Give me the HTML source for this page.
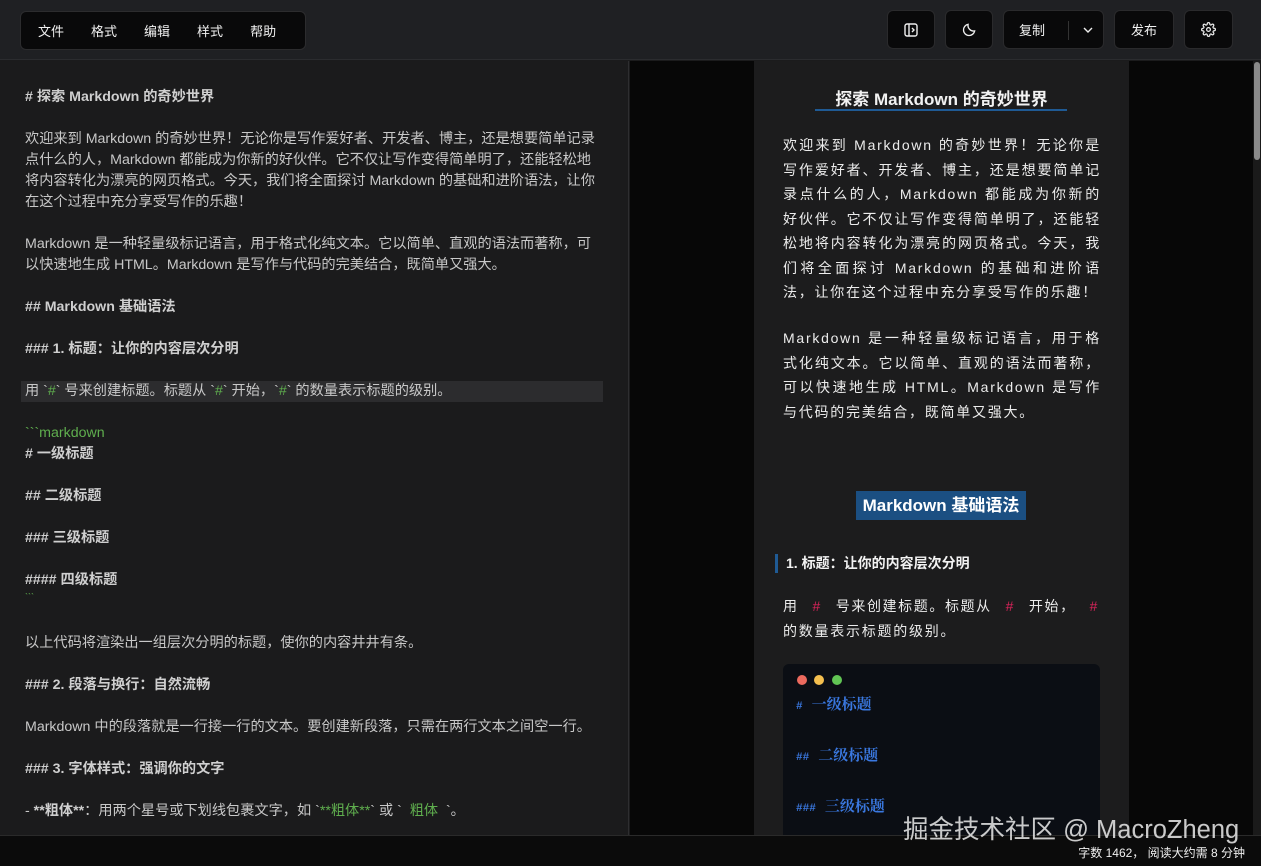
<!DOCTYPE html>
<html><head><meta charset="utf-8">
<style>
*{box-sizing:border-box;margin:0;padding:0}
body{width:1261px;height:866px;overflow:hidden;background:#1b1b1c;font-family:"Liberation Sans","Noto Sans CJK SC",sans-serif;position:relative;color:#ccc}
.top{position:absolute;left:0;top:0;width:1261px;height:60px;background:#1f2023;border-bottom:1px solid #2b2c2f}
.menu{position:absolute;left:20px;top:11px;width:286px;height:39px;background:#09090a;border:1px solid #2c2c2e;border-radius:6px;display:flex;align-items:center;padding-left:17px;gap:27px;font-size:13px;color:#f2f2f2}
.btn{position:absolute;top:10px;height:39px;background:#09090a;border:1px solid #2a2a2c;border-radius:6px;display:flex;align-items:center;justify-content:center;color:#f2f2f2;font-size:13px}
.editor{position:absolute;left:0;top:61px;width:629px;height:774px;background:#1b1b1c;border-right:1px solid #2e2e30;padding:26px 0 0 25px;font-size:14.2px;color:#c8c8c8}
.editor div{height:21px;line-height:21px;white-space:nowrap}
.b{font-weight:bold;color:#cfcfcf}
.g{color:#5fae4e}
.hl{background:#2c2c2e;margin-left:-4px;padding-left:4px;width:582px}
.pv{position:absolute;left:630px;top:61px;width:623px;height:774px;background:#070707}
.card{position:absolute;left:754px;top:61px;width:375px;height:774px;background:#1c1c1d;overflow:hidden}
.card p{position:absolute;left:29px;width:318px;font-size:14px;line-height:24.5px;letter-spacing:1.75px;color:#ececec;text-align:justify}
.sb{position:absolute;left:1253px;top:61px;width:8px;height:774px;background:#1a1a1a}
.foot{position:absolute;left:0;top:835px;width:1261px;height:31px;background:#0b0b0b;border-top:1px solid #2a2a2a}
.h{color:#d8245a}
</style></head><body>
<div class="top">
 <div class="menu"><span>文件</span><span>格式</span><span>编辑</span><span>样式</span><span>帮助</span></div>
 <div class="btn" style="left:887px;width:48px"><svg width="14" height="14" viewBox="0 0 14 14" fill="none" stroke="#eee" stroke-width="1.4"><rect x="1" y="1" width="12" height="12" rx="2"/><line x1="5" y1="1" x2="5" y2="13"/><path d="M8 5l2 2-2 2"/></svg></div>
 <div class="btn" style="left:945px;width:48px"><svg width="15" height="15" viewBox="0 0 16 16" fill="none" stroke="#eee" stroke-width="1.4"><path d="M13.5 9.5A6 6 0 0 1 6.5 2.5a6 6 0 1 0 7 7z"/></svg></div>
 <div class="btn" style="left:1003px;width:101px;justify-content:flex-start"><span style="margin-left:15px">复制</span><span style="position:absolute;left:64px;top:10px;width:1px;height:19px;background:#333"></span><svg style="position:absolute;left:78px;top:14px" width="12" height="10" viewBox="0 0 12 10" fill="none" stroke="#eee" stroke-width="1.4"><path d="M2 3l4 4 4-4"/></svg></div>
 <div class="btn" style="left:1114px;width:60px">发布</div>
 <div class="btn" style="left:1184px;width:49px"><svg width="15" height="15" viewBox="0 0 24 24" fill="none" stroke="#eee" stroke-width="2"><circle cx="12" cy="12" r="3"/><path d="M19.4 15a1.7 1.7 0 0 0 .3 1.8l.1.1a2 2 0 1 1-2.8 2.8l-.1-.1a1.7 1.7 0 0 0-1.8-.3 1.7 1.7 0 0 0-1 1.5V21a2 2 0 1 1-4 0v-.1a1.7 1.7 0 0 0-1.1-1.5 1.7 1.7 0 0 0-1.8.3l-.1.1a2 2 0 1 1-2.8-2.8l.1-.1a1.7 1.7 0 0 0 .3-1.8 1.7 1.7 0 0 0-1.5-1H3a2 2 0 1 1 0-4h.1a1.7 1.7 0 0 0 1.5-1.1 1.7 1.7 0 0 0-.3-1.8l-.1-.1a2 2 0 1 1 2.8-2.8l.1.1a1.7 1.7 0 0 0 1.8.3H9a1.7 1.7 0 0 0 1-1.5V3a2 2 0 1 1 4 0v.1a1.7 1.7 0 0 0 1 1.5 1.7 1.7 0 0 0 1.8-.3l.1-.1a2 2 0 1 1 2.8 2.8l-.1.1a1.7 1.7 0 0 0-.3 1.8V9a1.7 1.7 0 0 0 1.5 1H21a2 2 0 1 1 0 4h-.1a1.7 1.7 0 0 0-1.5 1z"/></svg></div>
</div>
<div class="editor">
<div class="b"># 探索 Markdown 的奇妙世界</div><div></div>
<div>欢迎来到 Markdown 的奇妙世界！无论你是写作爱好者、开发者、博主，还是想要简单记录</div>
<div>点什么的人，Markdown 都能成为你新的好伙伴。它不仅让写作变得简单明了，还能轻松地</div>
<div>将内容转化为漂亮的网页格式。今天，我们将全面探讨 Markdown 的基础和进阶语法，让你</div>
<div>在这个过程中充分享受写作的乐趣！</div><div></div>
<div>Markdown 是一种轻量级标记语言，用于格式化纯文本。它以简单、直观的语法而著称，可</div>
<div>以快速地生成 HTML。Markdown 是写作与代码的完美结合，既简单又强大。</div><div></div>
<div class="b">## Markdown 基础语法</div><div></div>
<div class="b">### 1. 标题：让你的内容层次分明</div><div></div>
<div class="hl">用 &#96;<span class="g">#</span>&#96; 号来创建标题。标题从 &#96;<span class="g">#</span>&#96; 开始，&#96;<span class="g">#</span>&#96; 的数量表示标题的级别。</div><div></div>
<div class="g">&#96;&#96;&#96;markdown</div>
<div class="b"># 一级标题</div><div></div>
<div class="b">## 二级标题</div><div></div>
<div class="b">### 三级标题</div><div></div>
<div class="b">#### 四级标题</div>
<div class="g" style="font-size:9px;line-height:12px;height:42px">&#96;&#96;&#96;</div>
<div>以上代码将渲染出一组层次分明的标题，使你的内容井井有条。</div><div></div>
<div class="b">### 2. 段落与换行：自然流畅</div><div></div>
<div>Markdown 中的段落就是一行接一行的文本。要创建新段落，只需在两行文本之间空一行。</div><div></div>
<div class="b">### 3. 字体样式：强调你的文字</div><div></div>
<div>- <span class="b">**粗体**</span>：用两个星号或下划线包裹文字，如 &#96;<span class="g">**粗体**</span>&#96; 或 &#96;&nbsp;&nbsp;<span class="g">粗体</span>&nbsp;&nbsp;&#96;。</div>
</div>
<div class="pv"></div>
<div class="card">
 <div style="position:absolute;left:0;width:375px;top:24px;text-align:center;font-size:17px;font-weight:bold;color:#f2f2f2">探索 Markdown 的奇妙世界</div>
 <div style="position:absolute;left:61px;top:48px;width:252px;height:2px;background:#1f5a94"></div>
 <p style="top:72px">欢迎来到 Markdown 的奇妙世界！无论你是写作爱好者、开发者、博主，还是想要简单记录点什么的人，Markdown 都能成为你新的好伙伴。它不仅让写作变得简单明了，还能轻松地将内容转化为漂亮的网页格式。今天，我们将全面探讨 Markdown 的基础和进阶语法，让你在这个过程中充分享受写作的乐趣！</p>
 <p style="top:265px">Markdown 是一种轻量级标记语言，用于格式化纯文本。它以简单、直观的语法而著称，可以快速地生成 HTML。Markdown 是写作与代码的完美结合，既简单又强大。</p>
 <div style="position:absolute;left:102px;top:430px;width:170px;height:29px;background:#1b4f82;color:#fff;font-size:17px;font-weight:bold;text-align:center;line-height:29px">Markdown 基础语法</div>
 <div style="position:absolute;left:21px;top:493px;width:3px;height:19px;background:#1f5a94"></div>
 <div style="position:absolute;left:32px;top:492px;font-size:14px;font-weight:bold;color:#f2f2f2;line-height:21px">1. 标题：让你的内容层次分明</div>
 <p style="top:533px;width:316px"><span style="display:flex;justify-content:space-between;letter-spacing:1.6px"><span>用</span><span class="h">#</span><span>号来创建标题。标题从</span><span class="h">#</span><span>开始，</span><span class="h">#</span></span>的数量表示标题的级别。</p>
 <div style="position:absolute;left:29px;top:603px;width:317px;height:200px;background:#0b0e14;border-radius:6px">
  <span style="position:absolute;left:14px;top:11px;width:10px;height:10px;border-radius:50%;background:#ec6a5e"></span>
  <span style="position:absolute;left:31px;top:11px;width:10px;height:10px;border-radius:50%;background:#f4bf4f"></span>
  <span style="position:absolute;left:49px;top:11px;width:10px;height:10px;border-radius:50%;background:#61c554"></span>
  <div style="position:absolute;left:13px;top:17px;color:#3a78e0;font-size:15px;font-weight:bold;line-height:49px;font-family:'Liberation Mono','Noto Serif CJK SC',monospace"><div><span style="font-size:11px">#</span> 一级标题</div><div><span style="font-size:11px">##</span> 二级标题</div><div><span style="font-size:11px">###</span> 三级标题</div></div>
 </div>
</div>
<div class="sb"><div style="position:absolute;left:1px;top:1px;width:6px;height:98px;background:#8a8a8a;border-radius:3px"></div></div>
<div class="foot"><span style="position:absolute;right:16px;top:8px;font-size:12px;color:#f0f0f0">字数 1462， 阅读大约需 8 分钟</span></div>
<div style="position:absolute;left:903px;top:809px;font-size:25.5px;color:rgba(235,235,235,0.85);white-space:nowrap">掘金技术社区 @ MacroZheng</div>
</body></html>
